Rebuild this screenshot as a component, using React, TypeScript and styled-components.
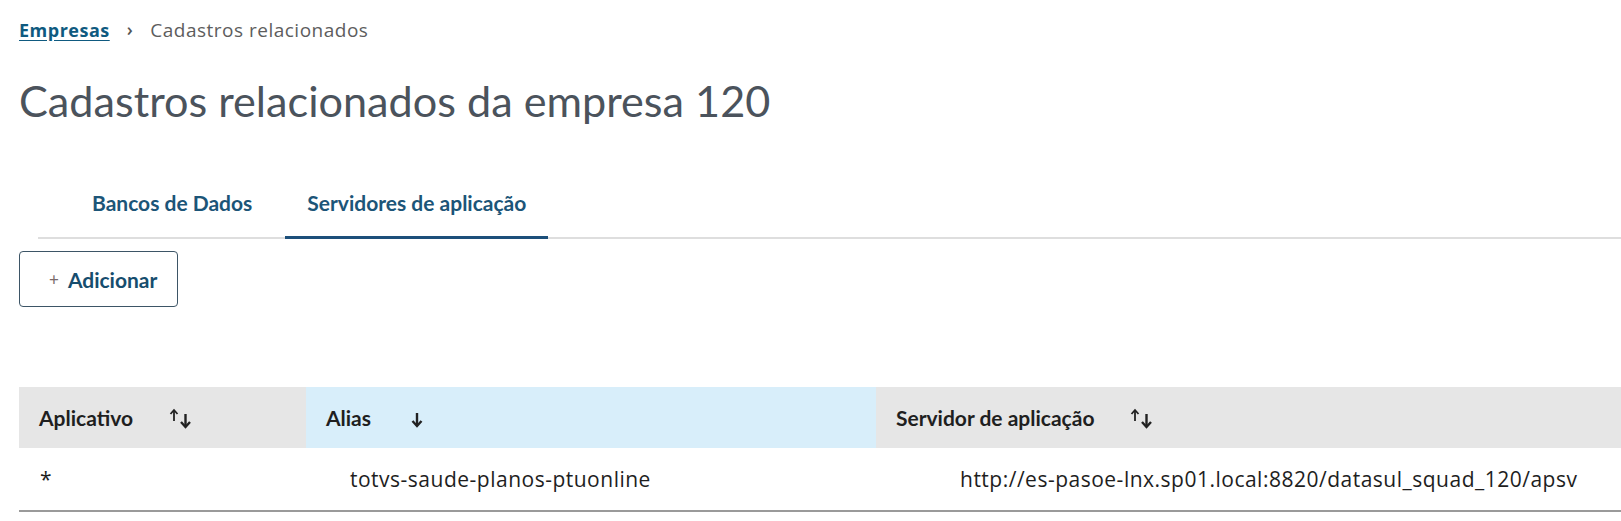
import React from "react";
import styled, { createGlobalStyle } from "styled-components";

const GlobalStyle = createGlobalStyle`
  html, body {
    margin: 0;
    padding: 0;
    background: #fff;
    overflow: hidden;
  }
  body {
    font-family: Lato, "Open Sans", sans-serif;
  }
`;

const Page = styled.div`
  padding: 17px 0 0 19px;
`;

const Breadcrumb = styled.nav`
  align-items: center;
  display: flex;
  font-family: "Open Sans", sans-serif;
  font-size: 18px;
  gap: 17px;
  height: 26px;
  letter-spacing: 0.5px;
`;

const CrumbLink = styled.a`
  color: #0f5a80;
  font-weight: 700;
  text-decoration: underline;
  text-underline-offset: 3px;
`;

const CrumbSep = styled.span`
  color: #555;
  font-size: 18px;
  font-weight: 600;
  margin-top: -2px;
`;

const CrumbCurrent = styled.span`
  color: #5d5d5d;
  font-size: 19px;
`;

const Title = styled.h1`
  color: #4b535c;
  font-size: 43.2px;
  font-weight: 400;
  line-height: 50px;
  margin: 32px 0 0;
`;

const TabBar = styled.div`
  border-bottom: 2px solid #dedede;
  display: flex;
  gap: 11px;
  margin: 45px 0 0 19px;
  padding-left: 32px;
`;

const Tab = styled.button<{ $active?: boolean }>`
  background: none;
  border: none;
  border-bottom: 3px solid ${(p) => (p.$active ? "#1c4f7a" : "transparent")};
  color: #1c5578;
  cursor: pointer;
  font-family: Lato, sans-serif;
  font-size: 21px;
  font-weight: 700;
  line-height: 25px;
  margin-bottom: -2px;
  padding: 20px 22px 21px;
`;

const AddButton = styled.button`
  align-items: center;
  background: #fff;
  border: 1px solid #3d5566;
  border-radius: 4px;
  color: #164d6e;
  display: flex;
  font-family: Lato, sans-serif;
  font-size: 21px;
  font-weight: 700;
  gap: 9px;
  height: 56px;
  margin-top: 12px;
  padding: 0 16px 0 29px;
  width: 159px;
`;

const Plus = styled.span`
  color: #7a6a6a;
  font-size: 17px;
  font-weight: 400;
`;

const Table = styled.div`
  margin-top: 80px;
`;

const HeaderRow = styled.div`
  display: grid;
  grid-template-columns: 287px 570px 1fr;
  height: 61px;
`;

const HeaderCell = styled.div<{ $sorted?: boolean }>`
  align-items: center;
  background: ${(p) => (p.$sorted ? "#d8eefa" : "#e6e6e6")};
  color: #1f1f1f;
  display: flex;
  font-size: 21px;
  font-weight: 700;
  gap: 36px;
  padding-left: 20px;
`;

const BodyRow = styled.div`
  border-bottom: 2px solid #9a9a9a;
  display: grid;
  grid-template-columns: 310px 610px 1fr;
  height: 62px;
`;

const BodyCell = styled.div`
  align-items: center;
  color: #1e1e1e;
  display: flex;
  font-family: "Open Sans", sans-serif;
  font-size: 21px;
  letter-spacing: 0.5px;
  padding-left: 21px;
`;

const SortIcon = ({ dir }: { dir: "both" | "down" }) =>
  dir === "both" ? (
    <svg width="24" height="22" viewBox="0 0 24 22" fill="none">
      <path d="M5 14V3.5" stroke="#222" strokeWidth="1.8" />
      <path d="M1.5 7L5 3L8.5 7" stroke="#222" strokeWidth="1.8" />
      <path d="M16.5 7V19.5" stroke="#222" strokeWidth="2.4" />
      <path d="M12 15L16.5 20L21 15" stroke="#222" strokeWidth="2.4" />
    </svg>
  ) : (
    <svg width="24" height="22" viewBox="0 0 24 22" fill="none">
      <path d="M10 6V18.5" stroke="#222" strokeWidth="2.4" />
      <path d="M5.5 14L10 19L14.5 14" stroke="#222" strokeWidth="2.4" />
    </svg>
  );

const columns = [
  { label: "Aplicativo", sort: "both" as const },
  { label: "Alias", sort: "down" as const, sorted: true },
  { label: "Servidor de aplicação", sort: "both" as const },
];

const rows = [
  [
    "*",
    "totvs-saude-planos-ptuonline",
    "http://es-pasoe-lnx.sp01.local:8820/datasul_squad_120/apsv",
  ],
];

export default function App() {
  return (
    <>
      <GlobalStyle />
      <Page>
        <Breadcrumb>
          <CrumbLink>Empresas</CrumbLink>
          <CrumbSep>›</CrumbSep>
          <CrumbCurrent>Cadastros relacionados</CrumbCurrent>
        </Breadcrumb>
        <Title>Cadastros relacionados da empresa 120</Title>
        <TabBar>
          <Tab>Bancos de Dados</Tab>
          <Tab $active>Servidores de aplicação</Tab>
        </TabBar>
        <AddButton>
          <Plus>+</Plus>
          Adicionar
        </AddButton>
        <Table>
          <HeaderRow>
            {columns.map((c) => (
              <HeaderCell key={c.label} $sorted={c.sorted}>
                {c.label}
                <SortIcon dir={c.sort} />
              </HeaderCell>
            ))}
          </HeaderRow>
          {rows.map((r, i) => (
            <BodyRow key={i}>
              {r.map((v, j) => (
                <BodyCell key={j}>{v}</BodyCell>
              ))}
            </BodyRow>
          ))}
        </Table>
      </Page>
    </>
  );
}
